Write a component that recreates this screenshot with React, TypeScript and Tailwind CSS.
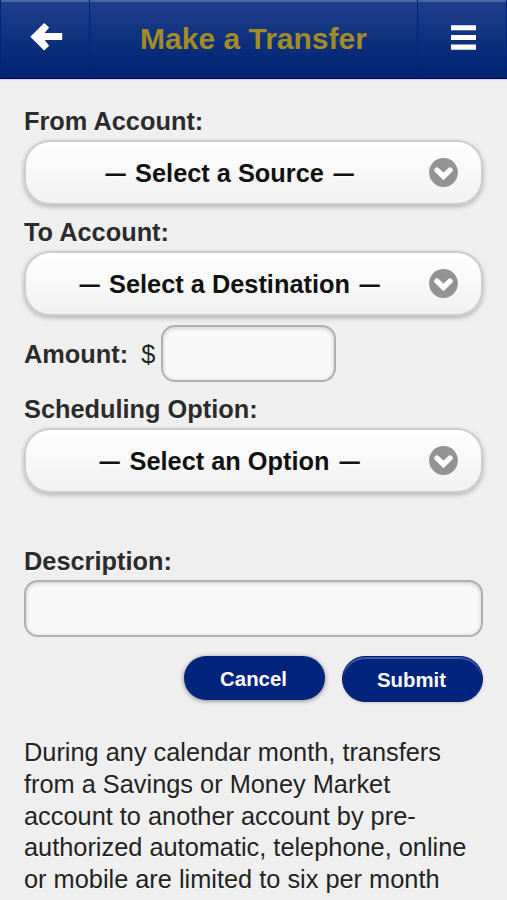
import React from 'react';

const labelClass = 'font-bold text-[#2b2b2b] [text-shadow:0_1px_0_#fff]';

const inputClass =
  'block h-[57px] rounded-[14px] border-2 border-[#b0b0b0] bg-[#f9f9f9] px-3 shadow-[inset_0_1px_4px_rgba(0,0,0,0.2)] outline-none';

const Dash: React.FC = () => <span className="inline-block scale-x-80">—</span>;

const ChevronIcon: React.FC = () => (
  <svg className="h-[29px] w-[29px] shrink-0" viewBox="0 0 29 29">
    <circle cx="14.5" cy="14.5" r="14.4" fill="#939393" />
    <path d="M8 12.1 L14.5 18.4 L21 12.1" fill="none" stroke="#fff" strokeWidth="5.4" strokeLinecap="round" strokeLinejoin="miter" />
  </svg>
);

const SelectButton: React.FC<{ text: string }> = ({ text }) => (
  <button
    type="button"
    className="flex h-[65px] w-full items-center rounded-[26px] border-2 border-[#cdcdcd] bg-linear-to-b from-white to-[#f1f1f1] pr-[23px] pl-[4px] font-bold text-[#111] shadow-[0_2px_5px_rgba(0,0,0,0.26)] [text-shadow:0_1px_0_#fff]"
  >
    <span className="flex-1 text-center whitespace-nowrap">
      <Dash /> {text} <Dash />
    </span>
    <ChevronIcon />
  </button>
);

const Header: React.FC = () => (
  <header className="flex h-[79px] border-b border-[#00007a] bg-linear-to-b from-[#1e3f8c] to-[#002370] shadow-[inset_0_2px_0_#4a659f,0_1px_1px_rgba(0,0,0,0.12)]">
    <button type="button" aria-label="Back" className="flex w-[90px] items-center border-r border-l border-r-[#00237f] border-l-[#00237f] pb-[4px] pl-[29px]">
      <svg className="h-[28px] w-[33px]" viewBox="0 0 33 28">
        <path d="M0.3 13.7 L14.2 0 L19.2 4.6 L14.6 10 H32.2 V17 H14.6 L19.2 22.8 L14.2 27.5 Z" fill="#fff" />
      </svg>
    </button>
    <h1 className="flex-1 text-center text-[30px] leading-[77px] font-bold text-[#a38b28]">Make a Transfer</h1>
    <button type="button" aria-label="Menu" className="flex w-[90px] items-center border-r border-l border-r-[#00237f] border-l-[#00237f] pb-[2px] pl-[33px]">
      <svg className="h-[26px] w-[25px]" viewBox="0 0 25 26">
        <path d="M0 0.2 H25 V5.3 H0 Z M0 10 H25 V15 H0 Z M0 19.4 H25 V24.7 H0 Z" fill="#fff" />
      </svg>
    </button>
  </header>
);

const App: React.FC = () => {
  return (
    <div className="h-[900px] w-[507px] overflow-hidden bg-[#efefef] font-['Liberation_Sans',Arial,sans-serif] text-[25.35px] leading-[32px] text-[#222]">
      <Header />
      <main className="px-[24px] pt-[26px]">
        <label className={`${labelClass} mb-[3px] block`}>From Account:</label>
        <SelectButton text="Select a Source" />

        <label className={`${labelClass} mt-[11px] mb-[3px] block`}>To Account:</label>
        <SelectButton text="Select a Destination" />

        <div className="mt-[9px] flex items-center">
          <label className={labelClass}>Amount:</label>
          <span className="mr-[6px] ml-[13px] [text-shadow:0_1px_0_#fff]">$</span>
          <input className={`${inputClass} w-[175px]`} />
        </div>

        <label className={`${labelClass} mt-[11px] mb-[3px] block`}>Scheduling Option:</label>
        <SelectButton text="Select an Option" />

        <label className={`${labelClass} mt-[52px] mb-[3px] block`}>Description:</label>
        <input className={`${inputClass} w-full`} />

        <div className="mt-[19px] flex items-start justify-end gap-[17px] text-[20.4px] font-bold text-white">
          <button type="button" className="h-[44px] w-[141px] rounded-full bg-[#00237c] pt-[2px] pr-[2px] shadow-[0_1px_5px_rgba(0,0,0,0.45)]">
            Cancel
          </button>
          <button type="button" className="h-[46px] w-[141px] rounded-full border border-[#001f7a] bg-[#00237c] pt-[2px] pr-[2px] shadow-[inset_0_2px_0_#4059a0,0_1px_3px_rgba(0,0,0,0.15)]">
            Submit
          </button>
        </div>

        <p className="mt-[35px] leading-[31.75px] whitespace-nowrap [text-shadow:0_1px_0_#fff]">
          During any calendar month, transfers
          <br />
          from a Savings or Money Market
          <br />
          account to another account by pre-
          <br />
          authorized automatic, telephone, online
          <br />
          or mobile are limited to six per month
        </p>
      </main>
    </div>
  );
};

export default App;
